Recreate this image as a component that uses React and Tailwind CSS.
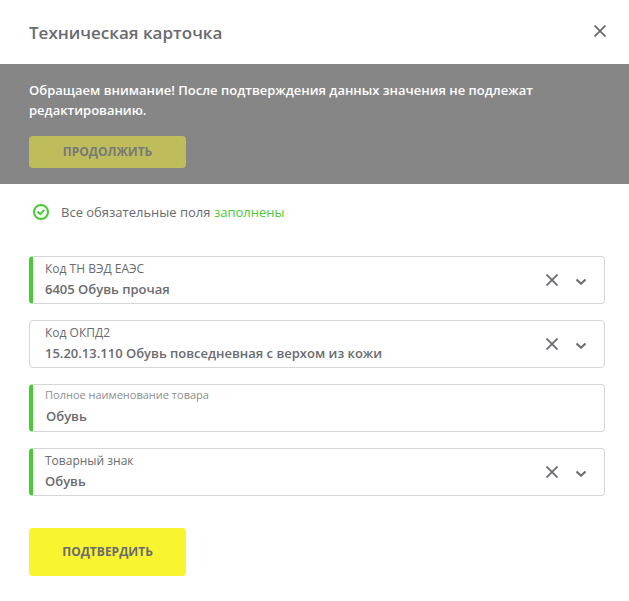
import { useState } from "react";

function CrossIcon() {
  return (
    <svg viewBox="0 0 12 12" className="size-3" fill="none" stroke="currentColor" strokeWidth="1.8" aria-hidden="true">
      <path d="M0.5 0.5L11.5 11.5M11.5 0.5L0.5 11.5" />
    </svg>
  );
}

function ChevronIcon() {
  return (
    <svg viewBox="0 0 10 6" className="mt-1 h-1.5 w-2.5 shrink-0" fill="none" stroke="currentColor" strokeWidth="2" aria-hidden="true">
      <path d="M0.5 0.5L5 4.7L9.5 0.5" />
    </svg>
  );
}

function CheckCircleIcon() {
  return (
    <svg viewBox="0 0 16 16" className="size-4 shrink-0 text-[#49cb36]" fill="none" stroke="currentColor" strokeWidth="2" aria-hidden="true">
      <circle cx="8" cy="8" r="7" />
      <path d="M4.5 7.6L7.2 10.1L11.4 5.9" />
    </svg>
  );
}

function FieldBox({ marked, children }) {
  const edge = marked ? "border-l-4 border-l-[#49cb36]" : "pl-[3px]";
  return <div className={`flex h-12 rounded border border-[#d5d6d8] ${edge}`}>{children}</div>;
}

function SelectField({ id, label, value, marked }) {
  const [current, setCurrent] = useState(value);
  return (
    <FieldBox marked={marked}>
      <div className="flex min-w-0 flex-1 flex-col pt-1 pl-3">
        <label htmlFor={id} className="text-xs leading-4">{label}</label>
        <select
          id={id}
          value={current}
          onChange={(e) => setCurrent(e.target.value)}
          className="h-6 w-full appearance-none bg-transparent text-[13px] leading-6 font-semibold outline-none"
        >
          <option value="" />
          <option value={value}>{value}</option>
        </select>
      </div>
      <div className="flex shrink-0 items-center gap-[18px] pr-[18px] pl-3">
        <button type="button" aria-label="Очистить" onClick={() => setCurrent("")}>
          <CrossIcon />
        </button>
        <ChevronIcon />
      </div>
    </FieldBox>
  );
}

function TextField({ id, label, value, marked }) {
  return (
    <FieldBox marked={marked}>
      <div className="flex min-w-0 flex-1 flex-col px-3 pt-0.5">
        <label htmlFor={id} className="text-[11px] leading-4 text-[#8d8e90]">{label}</label>
        <input
          id={id}
          defaultValue={value}
          className="mt-px h-6 w-full bg-transparent pl-px text-[13px] leading-6 font-semibold outline-none"
        />
      </div>
    </FieldBox>
  );
}

export default function App() {
  return (
    <main className="min-h-screen bg-white font-['Open_Sans','Noto_Sans',sans-serif] text-[#696b70]">
      <header className="flex h-16 items-center justify-between pr-[23px] pb-0.5 pl-[29px]">
        <h1 className="pt-1 text-[17px] leading-6 font-semibold">Техническая карточка</h1>
        <button type="button" aria-label="Закрыть">
          <CrossIcon />
        </button>
      </header>

      <section className="bg-[#868686] pt-4 pr-6 pb-4 pl-[29px]">
        <p className="max-w-[540px] text-[13px] leading-5 font-semibold text-white">
          Обращаем внимание! После подтверждения данных значения не подлежат редактированию.
        </p>
        <button type="button" className="mt-4 h-8 w-[157px] rounded bg-[#bfbc5b] text-xs font-bold text-[#777878]">
          ПРОДОЛЖИТЬ
        </button>
      </section>

      <form className="pr-6 pb-6 pl-[29px]" onSubmit={(e) => e.preventDefault()}>
        <p className="flex items-center gap-3 pt-4 pl-1 text-[13px] leading-6">
          <CheckCircleIcon />
          <span>
            Все обязательные поля <span className="text-[#49cb36]">заполнены</span>
          </span>
        </p>
        <div className="mt-8 flex flex-col gap-4">
          <SelectField id="tnved" label="Код ТН ВЭД ЕАЭС" value="6405 Обувь прочая" marked />
          <SelectField id="okpd" label="Код ОКПД2" value="15.20.13.110 Обувь повседневная с верхом из кожи" />
          <TextField id="name" label="Полное наименование товара" value="Обувь" marked />
          <SelectField id="brand" label="Товарный знак" value="Обувь" marked />
        </div>
        <button type="submit" className="mt-8 h-12 w-[157px] rounded bg-[#f8f430] text-xs font-bold">
          ПОДТВЕРДИТЬ
        </button>
      </form>
    </main>
  );
}
